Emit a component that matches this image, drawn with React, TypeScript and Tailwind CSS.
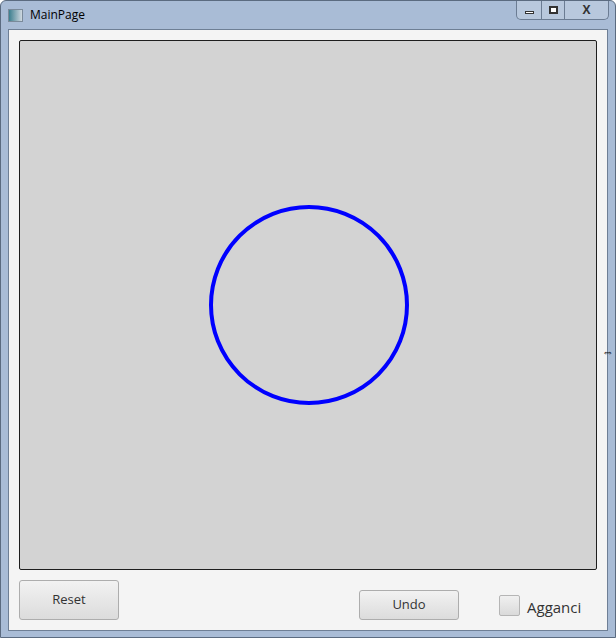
export default function App() {
  return (
    <div className="w-[616px] h-[638px] bg-[#a9bcd6] rounded-t-[6px] border border-[#5b6b80] flex flex-col relative" style={{ fontFamily: '"Segoe UI", "Open Sans", "Liberation Sans", sans-serif' }}>
      <div className="h-[28px] flex items-center pl-[7px] relative">
        <div className="w-[15px] h-[13px] border border-[#7a8a9a] bg-gradient-to-r from-[#3a7f8f] to-[#cfd8e0]" />
        <span className="ml-[7px] text-[12px] text-black">MainPage</span>
        <div className="absolute right-[6px] top-0 flex h-[19px] border border-t-0 border-[#6b7c93] rounded-b-[5px] overflow-hidden bg-[#b8c8dd]">
          <div className="w-[25px] flex items-center justify-center border-r border-[#6b7c93]"><div className="w-[9px] h-[3px] border border-[#333] bg-white mt-[5px]" /></div>
          <div className="w-[23px] flex items-center justify-center border-r border-[#6b7c93]"><div className="w-[9px] h-[8px] border-2 border-[#333] bg-white" /></div>
          <div className="w-[43px] flex items-center justify-center text-[12px] font-bold text-[#333]">X</div>
        </div>
      </div>
      <div className="mx-[7px] mb-[6px] flex-1 bg-[#f4f4f4] border border-[#6e7f95] flex flex-col px-[10px] pt-[10px]">
        <div className="h-[530px] bg-[#d3d3d3] border border-[#1e1e1e] rounded-[2px] relative">
          <svg className="absolute left-0 top-0" width="580" height="530">
            <circle cx="289" cy="264" r="98" fill="none" stroke="#0000ff" strokeWidth="4" />
          </svg>
        </div>
        <div className="flex items-start mt-[10px] text-[13px] text-[#333]">
          <div className="w-[100px] h-[40px] rounded-[3px] border border-[#adadad] bg-gradient-to-b from-[#f2f2f2] to-[#dcdcdc] flex items-center justify-center">Reset</div>
          <div className="ml-[240px] mt-[10px] w-[100px] h-[30px] rounded-[3px] border border-[#adadad] bg-gradient-to-b from-[#f2f2f2] to-[#dcdcdc] flex items-center justify-center">Undo</div>
          <div className="ml-[40px] mt-[15px] w-[21px] h-[21px] rounded-[2px] border border-[#b5b5b5] bg-gradient-to-b from-[#f0f0f0] to-[#dadada]" />
          <span className="ml-[7px] mt-[16px] text-[15px] text-[#333]">Agganci</span>
        </div>
      </div>
      <div className="absolute left-[601px] top-[345px] text-[12px] leading-none text-black">⇔</div>
    </div>
  );
}
